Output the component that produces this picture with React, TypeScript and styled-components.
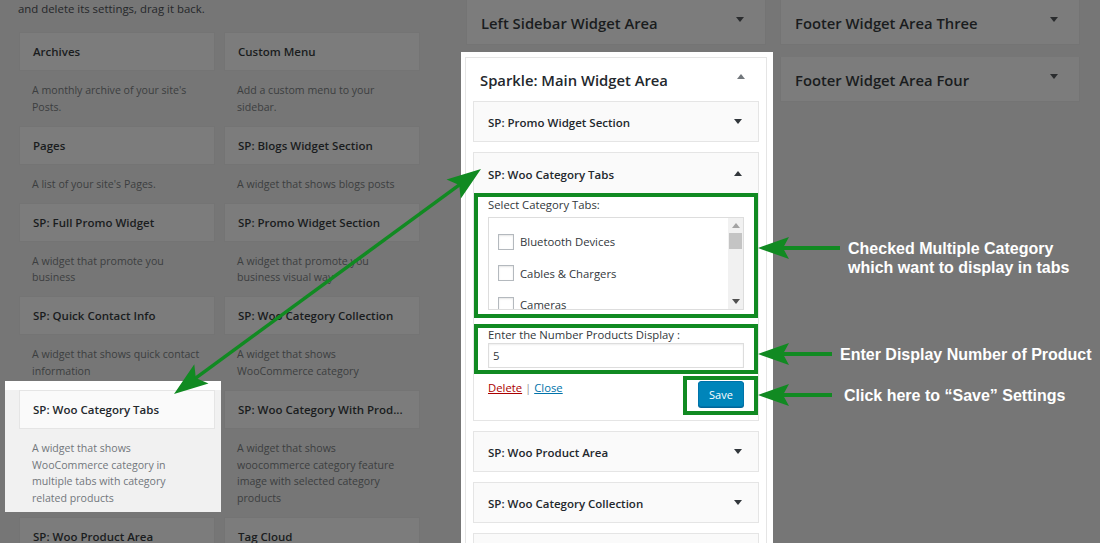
import React from 'react';
import styled, { createGlobalStyle, css } from 'styled-components';

const GREEN = '#118a22';
const FONT = "'Open Sans', 'Noto Sans', Arial, sans-serif";

const GlobalStyle = createGlobalStyle`
  html, body { margin: 0; padding: 0; background: #767676; }
  body { font-family: ${FONT}; }
  * { box-sizing: border-box; }
`;

const Page = styled.div`
  position: relative;
  width: 1100px;
  height: 543px;
  overflow: hidden;
  background: #767676;
  display: flex;
  align-items: flex-start;
  padding-left: 18px;
`;

/* ---------- left column: available widgets ---------- */
const LeftCol = styled.div`
  width: 402px;
  flex: none;
`;

const Intro = styled.p`
  margin: 0 0 15px;
  font-size: 11.4px;
  line-height: 17px;
  color: #25272a;
  white-space: nowrap;
`;

const WidgetGrid = styled.div`
  display: grid;
  grid-template-columns: 196px 196px;
  column-gap: 9px;
  margin-left: 1px;
  align-items: start;
`;

const Avail = styled.div<{ $lit?: boolean }>`
  ${(p) =>
    p.$lit &&
    css`
      margin: -9px -6px 5px -14px;
      padding: 0 6px 0 14px;
      border-top: 9px solid #ffffff;
      background: #f1f1f1;
      position: relative;
    `}
`;

const AvailTitle = styled.div<{ $lit?: boolean }>`
  height: 39px;
  line-height: 37px;
  padding-left: 13px;
  border: 1px solid ${(p) => (p.$lit ? '#e5e5e5' : '#747474')};
  background: ${(p) => (p.$lit ? '#fafafa' : '#7c7c7c')};
  color: ${(p) => (p.$lit ? '#23282d' : '#1a1c1e')};
  font-size: 11.5px;
  font-weight: 600;
  white-space: nowrap;
  overflow: hidden;
`;

const AvailDesc = styled.div<{ $lit?: boolean }>`
  padding: 11px 0 ${(p) => (p.$lit ? '5.5px' : '10.5px')} 13px;
  font-size: 10.6px;
  line-height: 16.6px;
  color: ${(p) => (p.$lit ? '#72777c' : '#3c3e40')};
  white-space: nowrap;
`;

/* ---------- shared bars ---------- */
const MidCol = styled.div`
  width: 300px;
  margin-left: 46px;
  flex: none;
  align-self: stretch;
  display: flex;
  flex-direction: column;
  min-height: 0;
`;

const RightCol = styled.div`
  width: 300px;
  margin-left: 14px;
  flex: none;
  display: flex;
  flex-direction: column;
  gap: 12px;
`;

const AreaBar = styled.div`
  flex: none;
  height: 45px;
  padding: 2px 21px 0 14px;
  background: #7c7c7c;
  border: 1px solid #747474;
  border-top: none;
  display: flex;
  align-items: center;
  justify-content: space-between;
`;

const AreaTitle = styled.span`
  font-size: 14.8px;
  font-weight: 600;
  color: #1a1c1e;
  white-space: nowrap;
`;

const Caret = styled.span<{ $up?: boolean; $color?: string; $shift?: number }>`
  width: 0;
  height: 0;
  flex: none;
  border-left: 4px solid transparent;
  border-right: 4px solid transparent;
  ${(p) =>
    p.$up
      ? css`border-bottom: 5px solid ${p.$color || '#555'};`
      : css`border-top: 5px solid ${p.$color || '#555'};`}
  transform: translateY(${(p) => p.$shift ?? 0}px);
`;

/* ---------- middle spotlight ---------- */
const Spot = styled.div`
  flex: 1;
  min-height: 0;
  overflow: hidden;
  margin: 7px -7px 0 -5px;
  padding: 5px 6px 0 4px;
  background: #ffffff;
  display: flex;
  flex-direction: column;
`;

const SidebarBox = styled.div`
  flex: 1;
  border: 1px solid #e5e5e5;
  border-bottom: none;
  background: #ffffff;
  padding: 0 7px;
`;

const SidebarHead = styled.div`
  height: 43px;
  padding: 1px 14px 0 7px;
  display: flex;
  align-items: center;
  justify-content: space-between;
`;

const SidebarTitle = styled.span`
  font-size: 14.8px;
  font-weight: 600;
  color: #23282d;
  white-space: nowrap;
`;

const Widget = styled.div`
  border: 1px solid #e5e5e5;
  background: #ffffff;
  & + & {
    margin-top: 10px;
  }
`;

const WidgetTop = styled.div<{ $open?: boolean }>`
  height: ${(p) => (p.$open ? '40px' : '39px')};
  padding: 2px 16px 0 14px;
  background: #fafafa;
  display: flex;
  align-items: center;
  justify-content: space-between;
`;

const WidgetTitle = styled.span`
  font-size: 11.5px;
  font-weight: 600;
  color: #23282d;
  white-space: nowrap;
`;

const WidgetInside = styled.div`
  padding: 0 0 5px 0;
`;

const Highlight = styled.div<{ $gap?: number }>`
  border: 4px solid ${GREEN};
  margin-top: ${(p) => p.$gap ?? 0}px;
`;

const FieldBlock = styled(Highlight)<{ $pb: number }>`
  padding: 0 10px ${(p) => p.$pb}px 10px;
`;

const FieldLabel = styled.div<{ $lh: number }>`
  font-size: 11.3px;
  line-height: ${(p) => p.$lh}px;
  color: #32373c;
  white-space: nowrap;
`;

const ListBox = styled.div`
  margin-top: 4px;
  height: 93px;
  border: 1px solid #dddddd;
  background: #fff;
  display: flex;
  overflow: hidden;
`;

const ListItems = styled.div`
  flex: 1;
  padding: 8px 0 0 9px;
  overflow: hidden;
`;

const ListRow = styled.label`
  height: 31.5px;
  display: flex;
  align-items: center;
  gap: 6px;
  font-size: 11.3px;
  color: #32373c;
  white-space: nowrap;
`;

const Check = styled.span`
  width: 16px;
  height: 16px;
  flex: none;
  border: 1px solid #b4b9be;
  background: #fff;
  box-shadow: inset 0 1px 2px rgba(0, 0, 0, 0.1);
`;

const ScrollTrack = styled.div`
  width: 15px;
  flex: none;
  background: #f1f1f1;
  display: flex;
  flex-direction: column;
  align-items: center;
`;

const ScrollBtn = styled.div`
  height: 15px;
  width: 100%;
  display: flex;
  align-items: center;
  justify-content: center;
`;

const ScrollThumb = styled.div`
  width: 13px;
  height: 16px;
  background: #c4c4c4;
`;

const ScrollFill = styled.div`
  flex: 1;
`;

const NumberInput = styled.div`
  margin-top: 1px;
  height: 25px;
  border: 1px solid #dddddd;
  box-shadow: inset 0 1px 2px rgba(0, 0, 0, 0.07);
  padding-left: 4px;
  font-size: 11.3px;
  line-height: 23px;
  color: #32373c;
`;

const Actions = styled.div`
  margin-top: 2px;
  display: flex;
  justify-content: space-between;
  align-items: flex-start;
`;

const Links = styled.div`
  margin-top: 4px;
  padding-left: 14px;
  font-size: 11.3px;
  line-height: 16px;
  color: #999;
`;

const ActionLink = styled.a<{ $danger?: boolean }>`
  color: ${(p) => (p.$danger ? '#a00' : '#0073aa')};
  text-decoration: underline;
`;

const SaveBox = styled(Highlight)`
  padding: 1px 10px 4px 11px;
`;

const SaveButton = styled.button`
  width: 46px;
  height: 26px;
  padding: 0;
  border: 1px solid #0073aa;
  border-radius: 3px;
  background: #0085ba;
  box-shadow: 0 1px 0 #006799;
  color: #fff;
  font-family: ${FONT};
  font-size: 11px;
  display: block;
`;

/* ---------- annotations ---------- */
const Overlay = styled.svg`
  position: absolute;
  left: 0;
  top: 0;
  pointer-events: none;
`;

const Note = styled.div<{ $x: number; $y: number }>`
  position: absolute;
  left: ${(p) => p.$x}px;
  top: ${(p) => p.$y}px;
  font-family: 'Liberation Sans', Arial, sans-serif;
  font-weight: 700;
  font-size: 16px;
  line-height: 19px;
  color: #ffffff;
  white-space: nowrap;
`;

type Item = { title: string; desc: string[]; lit?: boolean };

const items: Item[] = [
  { title: 'Archives', desc: ["A monthly archive of your site's", 'Posts.'] },
  { title: 'Custom Menu', desc: ['Add a custom menu to your', 'sidebar.'] },
  { title: 'Pages', desc: ["A list of your site's Pages."] },
  { title: 'SP: Blogs Widget Section', desc: ['A widget that shows blogs posts'] },
  { title: 'SP: Full Promo Widget', desc: ['A widget that promote you', 'business'] },
  { title: 'SP: Promo Widget Section', desc: ['A widget that promote you', 'business visual way'] },
  { title: 'SP: Quick Contact Info', desc: ['A widget that shows quick contact', 'information'] },
  { title: 'SP: Woo Category Collection', desc: ['A widget that shows', 'WooCommerce category'] },
  {
    title: 'SP: Woo Category Tabs',
    desc: ['A widget that shows', 'WooCommerce category in', 'multiple tabs with category', 'related products'],
    lit: true,
  },
  {
    title: 'SP: Woo Category With Prod...',
    desc: ['A widget that shows', 'woocommerce category feature', 'image with selected category', 'products'],
  },
  { title: 'SP: Woo Product Area', desc: ['A widget that shows'] },
  { title: 'Tag Cloud', desc: ['A cloud of your most used tags.'] },
];

function headPoints(tx: number, ty: number, ux: number, uy: number, len = 34, half = 12, notch = 27) {
  // u points from the tip back along the shaft
  const nx = -uy;
  const ny = ux;
  const bx = tx + ux * len;
  const by = ty + uy * len;
  const p1 = `${tx},${ty}`;
  const p2 = `${(bx + nx * half).toFixed(1)},${(by + ny * half).toFixed(1)}`;
  const p3 = `${(tx + ux * notch).toFixed(1)},${(ty + uy * notch).toFixed(1)}`;
  const p4 = `${(bx - nx * half).toFixed(1)},${(by - ny * half).toFixed(1)}`;
  return `${p1} ${p2} ${p3} ${p4}`;
}

const Annotations: React.FC = () => {
  const ax = 174,
    ay = 394,
    bx = 481,
    by = 169;
  const dx = bx - ax,
    dy = by - ay;
  const L = Math.hypot(dx, dy);
  const ux = dx / L,
    uy = dy / L;
  return (
    <Overlay width={1100} height={543} viewBox="0 0 1100 543">
      <g fill={GREEN} stroke="none">
        <polygon points={headPoints(bx, by, -ux, -uy)} />
        <polygon points={headPoints(ax, ay, ux, uy)} />
        <polygon points={headPoints(758, 248, 1, 0, 31, 11, 25)} />
        <polygon points={headPoints(758, 354, 1, 0, 31, 11, 25)} />
        <polygon points={headPoints(758, 395, 1, 0, 31, 11, 25)} />
      </g>
      <g stroke={GREEN} strokeLinecap="butt">
        <line
          x1={ax + ux * 26}
          y1={ay + uy * 26}
          x2={bx - ux * 26}
          y2={by - uy * 26}
          strokeWidth={3.5}
        />
        <line x1={781} y1={248} x2={840} y2={248} strokeWidth={4} />
        <line x1={781} y1={354} x2={832} y2={354} strokeWidth={4} />
        <line x1={781} y1={395} x2={832} y2={395} strokeWidth={4} />
      </g>
    </Overlay>
  );
};

export default function App() {
  return (
    <>
      <GlobalStyle />
      <Page>
        <LeftCol>
          <Intro>and delete its settings, drag it back.</Intro>
          <WidgetGrid>
            {items.map((it) => (
              <Avail key={it.title} $lit={it.lit}>
                <AvailTitle $lit={it.lit}>{it.title}</AvailTitle>
                <AvailDesc $lit={it.lit}>
                  {it.desc.map((l) => (
                    <div key={l}>{l}</div>
                  ))}
                </AvailDesc>
              </Avail>
            ))}
          </WidgetGrid>
        </LeftCol>

        <MidCol>
          <AreaBar>
            <AreaTitle>Left Sidebar Widget Area</AreaTitle>
            <Caret $color="#2a2c2e" $shift={-4} />
          </AreaBar>
          <Spot>
            <SidebarBox>
              <SidebarHead>
                <SidebarTitle>Sparkle: Main Widget Area</SidebarTitle>
                <Caret $up $color="#72777c" $shift={-4} />
              </SidebarHead>

              <Widget>
                <WidgetTop>
                  <WidgetTitle>SP: Promo Widget Section</WidgetTitle>
                  <Caret $color="#32373c" $shift={-1} />
                </WidgetTop>
              </Widget>

              <Widget>
                <WidgetTop $open>
                  <WidgetTitle>SP: Woo Category Tabs</WidgetTitle>
                  <Caret $up $color="#32373c" $shift={-1} />
                </WidgetTop>
                <WidgetInside>
                  <FieldBlock $pb={4}>
                    <FieldLabel $lh={16}>Select Category Tabs:</FieldLabel>
                    <ListBox>
                      <ListItems>
                        {['Bluetooth Devices', 'Cables & Chargers', 'Cameras'].map((c) => (
                          <ListRow key={c}>
                            <Check />
                            {c}
                          </ListRow>
                        ))}
                      </ListItems>
                      <ScrollTrack>
                        <ScrollBtn>
                          <Caret $up $color="#a3a3a3" />
                        </ScrollBtn>
                        <ScrollThumb />
                        <ScrollFill />
                        <ScrollBtn>
                          <Caret $color="#505050" />
                        </ScrollBtn>
                      </ScrollTrack>
                    </ListBox>
                  </FieldBlock>

                  <FieldBlock $gap={6} $pb={2}>
                    <FieldLabel $lh={14}>Enter the Number Products Display :</FieldLabel>
                    <NumberInput>5</NumberInput>
                  </FieldBlock>

                  <Actions>
                    <Links>
                      <ActionLink $danger>Delete</ActionLink> | <ActionLink>Close</ActionLink>
                    </Links>
                    <SaveBox>
                      <SaveButton>Save</SaveButton>
                    </SaveBox>
                  </Actions>
                </WidgetInside>
              </Widget>

              <Widget>
                <WidgetTop>
                  <WidgetTitle>SP: Woo Product Area</WidgetTitle>
                  <Caret $color="#32373c" $shift={-1} />
                </WidgetTop>
              </Widget>

              <Widget>
                <WidgetTop>
                  <WidgetTitle>SP: Woo Category Collection</WidgetTitle>
                  <Caret $color="#32373c" $shift={-1} />
                </WidgetTop>
              </Widget>

              <Widget>
                <WidgetTop />
              </Widget>
            </SidebarBox>
          </Spot>
        </MidCol>

        <RightCol>
          <AreaBar>
            <AreaTitle>Footer Widget Area Three</AreaTitle>
            <Caret $color="#2a2c2e" $shift={-4} />
          </AreaBar>
          <AreaBar>
            <AreaTitle>Footer Widget Area Four</AreaTitle>
            <Caret $color="#2a2c2e" $shift={-4} />
          </AreaBar>
        </RightCol>

        <Annotations />
        <Note $x={848} $y={239}>
          Checked Multiple Category
          <br />
          which want to display in tabs
        </Note>
        <Note $x={840} $y={345}>
          Enter Display Number of Product
        </Note>
        <Note $x={844} $y={386}>
          Click here to “Save” Settings
        </Note>
      </Page>
    </>
  );
}
